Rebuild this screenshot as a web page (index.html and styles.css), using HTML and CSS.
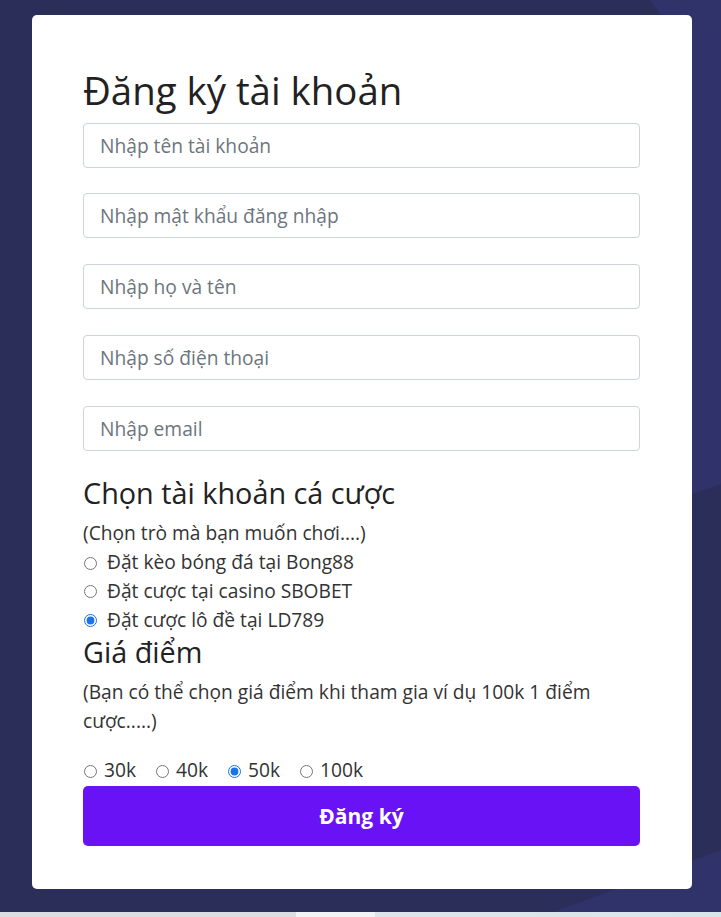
FILE: index.html
```html
<!DOCTYPE html>
<html lang="vi">
<head>
<meta charset="utf-8">
<title>Đăng ký tài khoản</title>
<link rel="stylesheet" href="styles.css">
</head>
<body>
<section class="hero">
  <form class="card">
    <h1 class="title">Đăng ký tài khoản</h1>
    <input class="field" type="text" placeholder="Nhập tên tài khoản">
    <input class="field" type="password" placeholder="Nhập mật khẩu đăng nhập">
    <input class="field" type="text" placeholder="Nhập họ và tên">
    <input class="field" type="text" placeholder="Nhập số điện thoại">
    <input class="field" type="email" placeholder="Nhập email">

    <h2 class="subtitle">Chọn tài khoản cá cược</h2>
    <p class="text">(Chọn trò mà bạn muốn chơi....)</p>
    <label class="check"><input type="radio" name="game"><span>Đặt kèo bóng đá tại Bong88</span></label>
    <label class="check"><input type="radio" name="game"><span>Đặt cược tại casino SBOBET</span></label>
    <label class="check"><input type="radio" name="game" checked><span>Đặt cược lô đề tại LD789</span></label>

    <h2 class="subtitle">Giá điểm</h2>
    <p class="text note">(Bạn có thể chọn giá điểm khi tham gia ví dụ 100k 1 điểm cược.....)</p>
    <div class="prices">
      <label class="price"><input type="radio" name="price"><span>30k</span></label>
      <label class="price"><input type="radio" name="price"><span>40k</span></label>
      <label class="price"><input type="radio" name="price" checked><span>50k</span></label>
      <label class="price"><input type="radio" name="price"><span>100k</span></label>
    </div>
    <button class="submit" type="button">Đăng ký</button>
  </form>
</section>
<div class="strip"></div>
</body>
</html>
```

FILE: styles.css
```css
* { box-sizing: border-box; }

html, body {
  margin: 0;
  padding: 0;
}

body {
  font-family: "Open Sans", "Noto Sans", sans-serif;
  color: #212529;
  background: #dfe2e8;
}

.hero {
  background-color: #2c2e5a;
  background-image: url("data:image/svg+xml,%3Csvg xmlns='http://www.w3.org/2000/svg' width='721' height='912' viewBox='0 0 721 912'%3E%3Cpolygon points='650,0 721,0 721,484 692,494 672,30' fill='%2330336a'/%3E%3Cpolygon points='554,912 721,850 721,912' fill='%2330336a'/%3E%3C/svg%3E");
  background-repeat: no-repeat;
  background-size: 721px 912px;
  padding: 15px 29px 23px 32px;
}

.card {
  width: 660px;
  background: #ffffff;
  border-radius: 5px;
  padding: 53px 52px 43px 51px;
  display: flex;
  flex-direction: column;
}

.title {
  font-size: 38.4px;
  font-weight: 400;
  line-height: 45.6px;
  margin: 0 0 9px;
  color: #222;
}

.field {
  display: block;
  width: 100%;
  height: 45px;
  margin: 0 0 25.75px;
  padding: 0 16px;
  font-family: inherit;
  font-size: 19.2px;
  color: #495057;
  border: 1px solid #ced4da;
  border-radius: 4px;
  background: #fff;
  outline: none;
}

.field::placeholder {
  color: #6c757d;
  opacity: 1;
}

.subtitle {
  font-size: 28.8px;
  font-weight: 400;
  line-height: 33.6px;
  margin: 0 0 9.5px;
  color: #222;
}

.text {
  font-size: 19.2px;
  line-height: 28.8px;
  margin: 0;
  color: #333;
}

.note { margin-bottom: 21px; }

.check {
  display: flex;
  align-items: center;
  font-size: 19.2px;
  line-height: 28.8px;
  color: #333;
}

.check input,
.price input {
  width: 13px;
  height: 13px;
  margin: 0;
  accent-color: #1a73e8;
}

.check input { margin: 1px 10px 0 1px; }

.prices {
  display: flex;
  align-items: center;
  gap: 19px;
  margin-bottom: 1px;
}

.price {
  display: flex;
  align-items: center;
  font-size: 19.2px;
  line-height: 28.8px;
  color: #333;
}

.price input { margin: 1px 7px 0 1px; }

.submit {
  height: 60px;
  width: 100%;
  border: none;
  border-radius: 5px;
  background: #6a12f6;
  color: #fff;
  font-family: inherit;
  font-size: 21px;
  font-weight: 700;
  cursor: pointer;
}

.strip {
  height: 5px;
  background: linear-gradient(90deg, #dcdde3 0%, #dcdde3 41%, #f2f3f5 41%, #f2f3f5 52%, #dde5ea 52%, #d8e6ea 100%);
}
```
